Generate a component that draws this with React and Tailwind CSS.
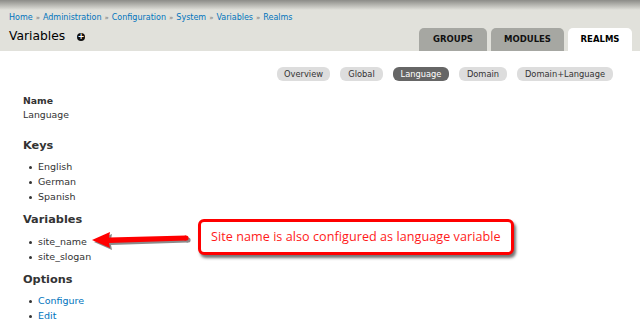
const FONT = { fontFamily: '"DejaVu Sans", Verdana, sans-serif' }

const primaryTabs = [
  { id: 'groups', label: 'GROUPS', w: 'w-[68px]' },
  { id: 'modules', label: 'MODULES', w: 'w-[73px]' },
  { id: 'realms', label: 'REALMS', w: 'w-[64px]', active: true },
]

const secondaryTabs = [
  { label: 'Overview', w: 'w-[53px]' },
  { label: 'Global', w: 'w-[43px]' },
  { label: 'Language', w: 'w-[56px]', active: true },
  { label: 'Domain', w: 'w-[48px]' },
  { label: 'Domain+Language', w: 'w-[96px]' },
]

const crumbs = ['Home', 'Administration', 'Configuration', 'System', 'Variables', 'Realms']

function Bullets({ items, link }) {
  return (
    <ul className="ml-[6px]">
      {items.map((item) => (
        <li key={item} className="flex items-center h-[15px] text-[9.5px]">
          <span className="w-[3px] h-[3px] rounded-full bg-[#333] mr-[6px]" />
          <span className={link ? 'text-[#0074bd]' : 'text-[#333]'}>{item}</span>
        </li>
      ))}
    </ul>
  )
}

function Heading({ children, className }) {
  return (
    <h2 className={'h-[16px] leading-[16px] text-[11.3px] font-bold text-[#333] ' + className}>
      {children}
    </h2>
  )
}

export default function App() {
  return (
    <div className="relative w-[640px] h-[331px] overflow-hidden bg-white" style={FONT}>
      <div className="relative h-[51px] bg-[#e1e1db] flex flex-col">
        <div className="absolute inset-x-0 top-0 h-[10px] bg-gradient-to-b from-[#8c8c88] to-[#e1e1db]" />
        <div className="relative ml-[9px] mt-[12px] flex items-center h-[12px] text-[8px] text-[#0074bd]">
          {crumbs.map((c, i) => (
            <span key={c} className="flex items-center">
              {i > 0 && <span className="text-[#777] text-[7px] mx-[3px]">»</span>}
              {c}
            </span>
          ))}
        </div>
        <div className="relative flex items-end justify-between mt-auto pl-[9px] pr-[8px]">
          <div className="flex items-center h-[22px] pb-[7px]">
            <span className="text-[12.3px] text-[#000]">Variables</span>
            <span className="ml-[12px] w-[8px] h-[8px] rounded-full bg-[#111] flex items-center justify-center text-white text-[8px] leading-none font-bold">+</span>
          </div>
          <div className="flex gap-[4px] h-[23px]">
            {primaryTabs.map((t) => (
              <div
                key={t.id}
                className={
                  'flex items-center justify-center rounded-t-[5px] text-[8.5px] font-bold ' +
                  t.w + ' ' + (t.active ? 'bg-white text-black' : 'bg-[#a6a7a2] text-[#111]')
                }
              >
                {t.label}
              </div>
            ))}
          </div>
        </div>
      </div>

      <div className="flex justify-end gap-[10px] pr-[27px] mt-[16px]">
        {secondaryTabs.map((t) => (
          <div
            key={t.label}
            className={
              'h-[14px] flex items-center justify-center rounded-[6px] text-[8.3px] ' +
              t.w + ' ' + (t.active ? 'bg-[#666] text-white' : 'bg-[#ddd] text-[#333]')
            }
          >
            {t.label}
          </div>
        ))}
      </div>

      <div className="pl-[23px] mt-[13px]">
        <div className="h-[14px] leading-[14px] text-[9.3px] font-bold text-[#333]">Name</div>
        <div className="h-[14px] leading-[14px] text-[9.3px] text-[#333]">Language</div>

        <Heading className="mt-[16px] mb-[6px]">Keys</Heading>
        <Bullets items={['English', 'German', 'Spanish']} />

        <Heading className="mt-[7px] mb-[7px]">Variables</Heading>
        <Bullets items={['site_name', 'site_slogan']} />

        <Heading className="mt-[7px] mb-[6px]">Options</Heading>
        <Bullets items={['Configure', 'Edit']} link />
      </div>

      <svg className="absolute left-[86px] top-[226px]" width="112" height="30" viewBox="0 0 112 30">
        <g transform="translate(2,2)" opacity="0.45">
          <path d="M6 14 L24 6 L23 11.5 L100 9.5 L100 14.5 L23 17 L24 22 Z" fill="#000" />
          <circle cx="100" cy="12" r="2.6" fill="#000" />
        </g>
        <path d="M6 14 L24 6 L23 11.5 L100 9.5 L100 14.5 L23 17 L24 22 Z" fill="#ff0000" />
        <circle cx="100" cy="12" r="2.6" fill="#ff0000" />
      </svg>

      <div
        className="absolute left-[198px] top-[219px] w-[316px] h-[36px] rounded-[6px] border-[3px] border-[#ff0000] bg-white flex items-center pl-[10px] text-[12.6px] text-[#ff1a1a] shadow-[2px_3px_3px_rgba(0,0,0,0.55)] tracking-[0.05px]"
        style={{ fontFamily: '"Open Sans", "Noto Sans", sans-serif' }}
      >
        Site name is also configured as language variable
      </div>
    </div>
  )
}
